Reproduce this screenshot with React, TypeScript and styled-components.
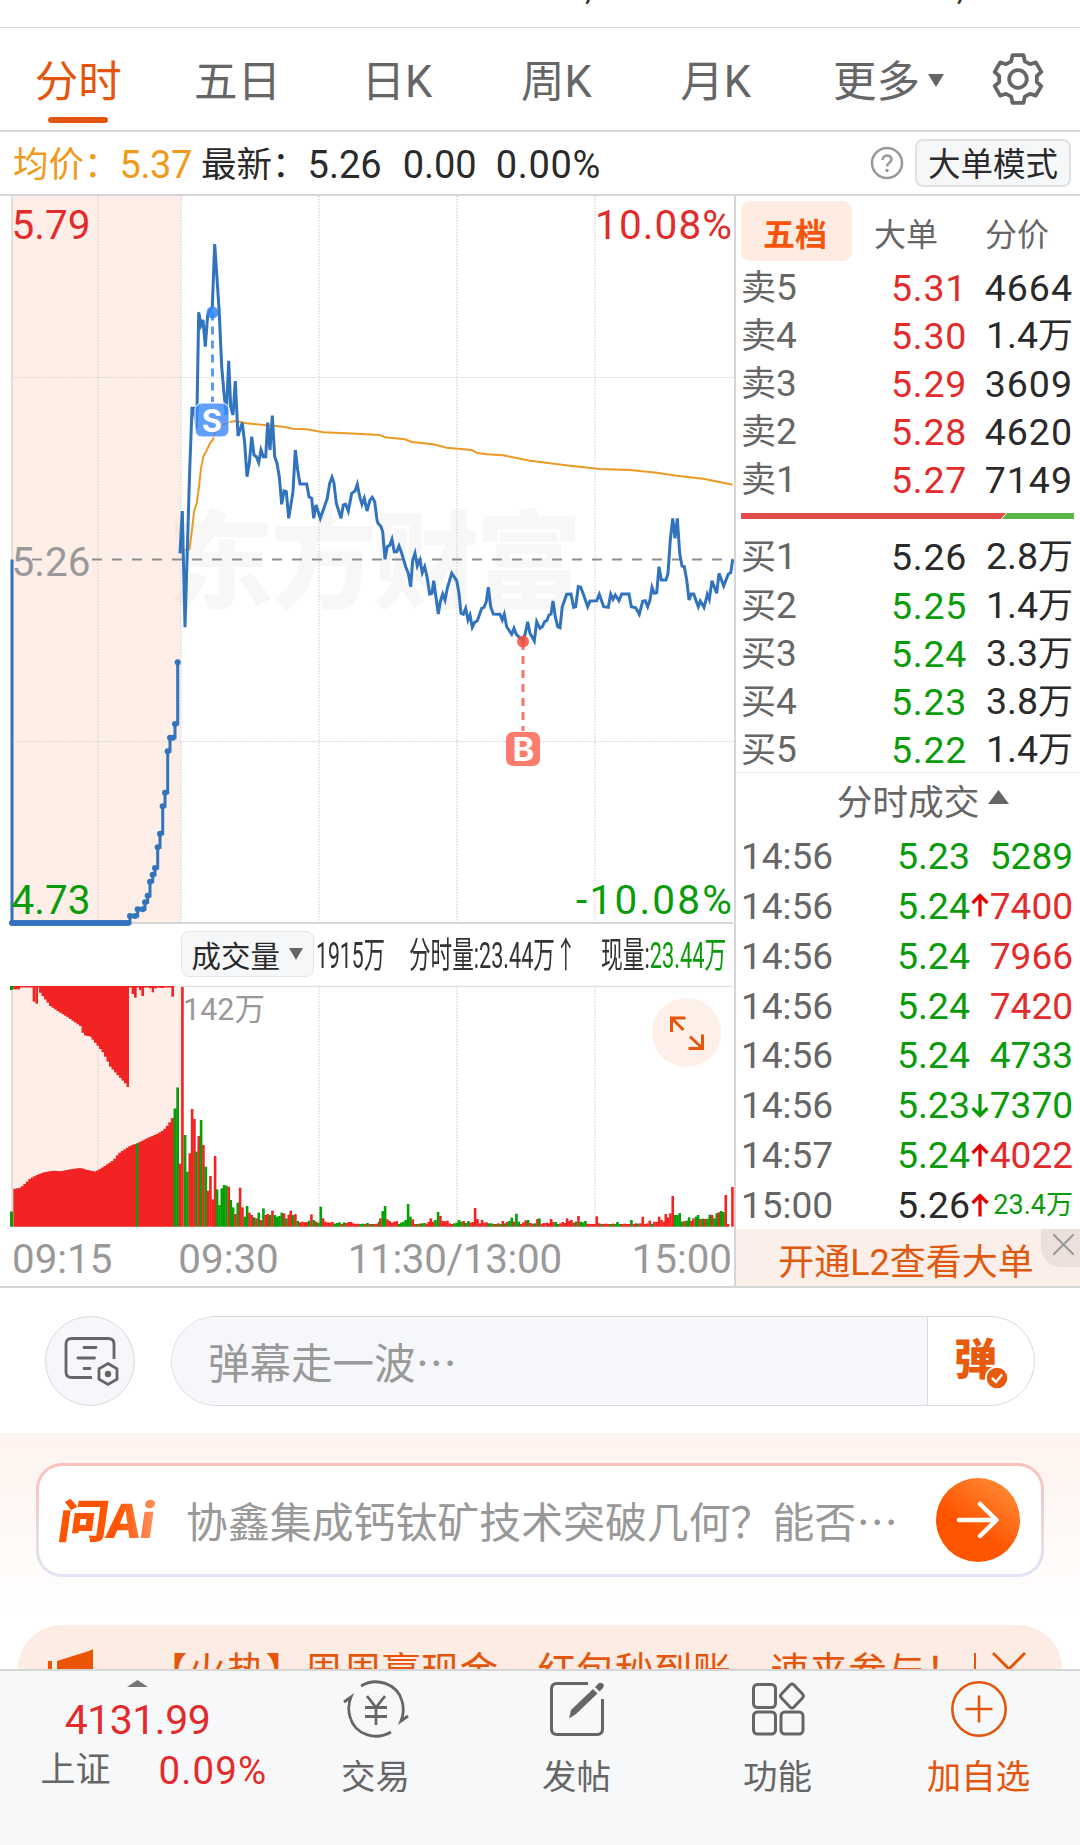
import React from "react";
import styled, { createGlobalStyle } from "styled-components";

const Global = createGlobalStyle`
  * { box-sizing: border-box; }
  html, body { margin: 0; padding: 0; background: #fff; }
  body { width: 1080px; height: 1845px; overflow: hidden; font-family: Roboto, "Noto Sans CJK SC", sans-serif; }
`;

const RED = "#e22b2b";
const GREEN = "#0a9b0a";
const ORANGE = "#e3560c";
const INK = "#2a2a2a";
const GRAY = "#666";
const MUTED = "#999";
const LINE = "#d6d6d8";

const Screen = styled.main`
  width: 1080px;
  height: 1845px;
  display: flex;
  flex-direction: column;
  overflow: hidden;
  background: #fff;
`;

const T = styled.span<{ $c?: string; $s?: number; $ls?: number; $ml?: number; $mt?: number }>`
  color: ${(p) => p.$c ?? INK};
  font-size: ${(p) => p.$s ?? 36}px;
  letter-spacing: ${(p) => p.$ls ?? 0}px;
  margin-left: ${(p) => p.$ml ?? 0}px;
  margin-top: ${(p) => p.$mt ?? 0}px;
  line-height: 1.2;
  white-space: nowrap;
`;

/* ---------- top ---------- */

const Peek = styled.div`
  height: 28px;
  border-bottom: 1.5px solid ${LINE};
  display: flex;
  padding-left: 585px;
  gap: 365px;
  align-items: flex-start;
  overflow: hidden;
`;
const PeekText = styled.span`
  height: 30px;
  font-size: 34px;
  line-height: 20px;
  margin-top: -22px;
  color: #333;
`;

const PeriodBar = styled.nav`
  height: 104px;
  display: flex;
  padding-left: 0;
  border-bottom: 2px solid ${LINE};
`;
const Period = styled.div<{ $on?: boolean }>`
  width: 159.4px;
  padding-right: 3px;
  flex: none;
  display: flex;
  flex-direction: column;
  align-items: center;
  padding-top: 29px;
  font-size: 43.5px;
  line-height: 52px;
  color: ${(p) => (p.$on ? ORANGE : GRAY)};
  &::after {
    content: "";
    width: 60px;
    height: 6px;
    border-radius: 3px;
    margin-top: 8px;
    background: ${(p) => (p.$on ? ORANGE : "transparent")};
  }
`;
const More = styled.div`
  display: flex;
  align-items: center;
  margin-left: 36px;
  width: 158px;
  gap: 8px;
  font-size: 43.5px;
  line-height: 52px;
  height: 52px;
  margin-top: 29px;
  color: ${GRAY};
  white-space: nowrap;
  svg { margin-top: -4px; }
`;
const GearBox = styled.div`
  padding-top: 24px;
`;

const InfoBar = styled.div`
  height: 64px;
  display: flex;
  align-items: center;
  padding: 0 9px 0 13px;
  border-bottom: 2px solid ${LINE};
`;
const Figures = styled.div`
  flex: 1;
  display: flex;
  align-items: center;
  padding-top: 5px;
`;
const Help = styled.svg`
  margin-right: 11px;
`;
const ModeButton = styled.div`
  width: 156px;
  height: 48px;
  border: 2px solid #e0e2e6;
  border-radius: 8px;
  background: #f6f7f9;
  display: flex;
  align-items: center;
  justify-content: center;
  padding-top: 4px;
  font-size: 32.5px;
  line-height: 40px;
  color: ${INK};
`;

/* ---------- quote ---------- */

const Quote = styled.section`
  height: 1092px;
  display: flex;
  border-bottom: 2px solid ${LINE};
`;
const ChartPane = styled.div`
  width: 734px;
  flex: none;
  display: flex;
  flex-direction: column;
`;
const Legend = styled.div`
  height: 60px;
  flex: none;
  display: flex;
  align-items: center;
  padding: 1px 0 0 181px;
`;
const Picker = styled.div`
  width: 132.5px;
  height: 46px;
  margin-top: -3px;
  border: 1.5px solid #e4e6ea;
  border-radius: 8px;
  background: #f6f7f9;
  display: flex;
  align-items: center;
  justify-content: center;
  gap: 9px;
  font-size: 29.5px;
  color: ${INK};
`;
const Narrow = styled.div<{ $w: number; $k: number; $ml: number }>`
  width: ${(p) => p.$w}px;
  margin-left: ${(p) => p.$ml}px;
  flex: none;
  span {
    display: inline-block;
    transform: scaleX(${(p) => p.$k});
    transform-origin: 0 50%;
    white-space: nowrap;
    font-size: 36px;
    line-height: 44px;
    color: #333;
  }
  i { font-style: normal; color: ${GREEN}; }
`;
const Volume = styled.div`
  position: relative;
  height: 243px;
  flex: none;
`;
const Expand = styled.div`
  position: absolute;
  left: 652px;
  top: 13px;
  width: 69px;
  height: 69px;
  border-radius: 50%;
  background: #fef0e8;
`;
const Times = styled.div`
  display: flex;
  height: 58px;
  flex: none;
  align-items: center;
  padding: 5px 2px 0 12px;
  font-size: 40.3px;
  color: ${MUTED};
  span:nth-child(2) { margin-left: 66px; }
  span:nth-child(3) { margin-left: 69px; letter-spacing: -0.3px; }
  span:nth-child(4) { margin-left: auto; }
`;

const Side = styled.aside`
  width: 346px;
  border-left: 2px solid ${LINE};
  display: flex;
  flex-direction: column;
`;
const SideTabs = styled.div`
  display: flex;
  height: 66px;
  flex: none;
  padding: 5px 0 0 5px;
`;
const SideTab = styled.div<{ $on?: boolean }>`
  width: 111px;
  height: 60px;
  display: flex;
  align-items: center;
  justify-content: center;
  padding: 1px 3px 0 0;
  border-radius: 9px;
  font-size: 32px;
  font-weight: ${(p) => (p.$on ? 700 : 400)};
  color: ${(p) => (p.$on ? "#f7540a" : GRAY)};
  background: ${(p) => (p.$on ? "#feebe2" : "transparent")};
`;
const Row = styled.div`
  height: 48.1px;
  flex: none;
  display: grid;
  grid-template-columns: 128px 98px 1fr;
  align-items: center;
  padding: 2px 7px 0 5px;
  font-size: 37.5px;
  line-height: 46px;
  color: ${GRAY};
  white-space: nowrap;
`;
const Level = styled.span`
  font-size: 37px;
  padding-top: 1px;
  b { font-weight: 400; font-size: 35px; }
`;
const Num = styled.span<{ $c: string; $s?: number; $ls?: number }>`
  text-align: right;
  color: ${(p) => p.$c};
  font-size: ${(p) => p.$s ?? 37.5}px;
  letter-spacing: ${(p) => p.$ls ?? 0}px;
  white-space: nowrap;
`;
const Unit = styled.span`
  font-size: 35px;
`;
const Ratio = styled.div`
  height: 29px;
  flex: none;
  padding: 11px 0 0 5px;
  svg { display: block; }
`;
const DealsHead = styled.div`
  height: 58px;
  flex: none;
  border-top: 1.5px solid #e6e6e8;
  display: flex;
  align-items: center;
  justify-content: center;
  gap: 9px;
  font-size: 35.7px;
  color: ${GRAY};
  padding: 0 0 3px 30px;
  svg { margin-top: -4px; }
`;
const DealRow = styled.div`
  height: 49.9px;
  flex: none;
  display: grid;
  grid-template-columns: 128px 101px 19px 1fr;
  align-items: center;
  padding: 3px 7px 0 5px;
  font-size: 37px;
  line-height: 45px;
  color: ${GRAY};
`;
const L2 = styled.div`
  position: relative;
  flex: 1;
  background: #fcefe9;
  display: flex;
  align-items: center;
  justify-content: center;
  padding: 3px 4px 0 0;
  font-size: 36px;
  color: #e0590f;
`;
const L2Close = styled.div`
  position: absolute;
  right: 0;
  top: 0;
  width: 39px;
  height: 38px;
  border-bottom-left-radius: 20px;
  background: #ebe0db;
  svg { display: block; margin: 5px 0 0 12px; }
`;

/* ---------- barrage ---------- */

const Barrage = styled.section`
  height: 145px;
  display: flex;
  align-items: flex-start;
  padding: 28px 45px 0;
  gap: 36px;
`;
const RoundIcon = styled.div`
  width: 90px;
  height: 90px;
  border-radius: 50%;
  border: 1.5px solid #d8dade;
  background: #f6f7fa;
  display: flex;
  align-items: center;
  justify-content: center;
  svg { margin-left: 1px; }
`;
const Field = styled.div`
  width: 864px;
  height: 90px;
  border: 1.5px solid #d8dade;
  border-radius: 46px;
  overflow: hidden;
  display: flex;
`;
const FieldText = styled.div`
  flex: 1;
  background: #f6f7fa;
  border-right: 1.5px solid #d8dade;
  padding-left: 36px;
  display: flex;
  align-items: center;
  font-family: "Noto Sans CJK SC", sans-serif;
  font-size: 41.5px;
  line-height: 60px;
  color: ${MUTED};
`;
const Toggle = styled.div`
  width: 106px;
  position: relative;
  padding: 15px 0 0 26px;
  font-size: 43px;
  line-height: 56px;
  font-weight: 800;
  color: #e85a0c;
  svg { position: absolute; left: 57px; top: 49px; }
`;

/* ---------- ask ai ---------- */

const AiZone = styled.section`
  height: 192px;
  padding: 30px 36px 0;
  background: linear-gradient(#fff3ee, #fff 95%);
`;
const AiCard = styled.div`
  height: 114px;
  border-radius: 26px;
  border: 3px solid transparent;
  background: linear-gradient(#fff, #fff) padding-box, linear-gradient(#f9c1b9, #e1e6f6) border-box;
  display: flex;
  align-items: center;
  padding: 0 21px 0 20px;
`;
const Logo = styled.div`
  width: 127px;
  flex: none;
  span {
    display: inline-block;
    transform: skewX(-8deg) scaleX(1.09);
    transform-origin: 0 50%;
    margin-top: -4px;
    font-family: "Noto Sans CJK SC", sans-serif;
    font-weight: 900;
    font-size: 46px;
    line-height: 60px;
    letter-spacing: -1px;
    background: linear-gradient(80deg, #ff5400 60%, #ff9a70);
    -webkit-background-clip: text;
    color: transparent;
  }
`;
const AiText = styled.div`
  flex: 1;
  font-family: "Noto Sans CJK SC", sans-serif;
  font-size: 41.9px;
  line-height: 60px;
  color: ${MUTED};
  white-space: nowrap;
`;
const Go = styled.div`
  width: 84px;
  height: 84px;
  flex: none;
  border-radius: 50%;
  background: linear-gradient(215deg, #ff9440, #ff5400 60%);
  display: flex;
  align-items: center;
  justify-content: center;
`;

const Promo = styled.section`
  height: 44px;
  margin: 0 18px;
  overflow: hidden;
  border-radius: 44px 44px 0 0;
  background: #fdece3;
  display: flex;
  align-items: flex-start;
  padding-left: 29px;
  svg { flex: none; }
`;
const PromoText = styled.div`
  width: 790px;
  flex: none;
  margin: 15px 18px 0 56px;
  overflow: hidden;
  white-space: nowrap;
  font-family: "Noto Sans CJK SC", sans-serif;
  font-size: 38.4px;
  letter-spacing: 0.45px;
  line-height: 56px;
  color: ${ORANGE};
`;
const Divider = styled.div`
  width: 1.5px;
  flex: none;
  height: 40px;
  margin: 28px 16px 0 17px;
  background: ${ORANGE};
`;

/* ---------- bottom ---------- */

const Bottom = styled.footer`
  height: 176px;
  border-top: 2px solid ${LINE};
  background: #f7f8fa;
  display: flex;
`;
const Index = styled.div`
  width: 275px;
  display: flex;
  flex-direction: column;
  align-items: center;
  padding-top: 9px;
`;
const IndexRow = styled.div`
  width: 276px;
  display: flex;
  align-items: center;
  padding-left: 41px;
  margin-top: 3px;
`;
const Action = styled.div<{ $c?: string }>`
  width: 201px;
  display: flex;
  flex-direction: column;
  align-items: center;
  padding-top: 8px;
  gap: 15px;
  font-size: 34.5px;
  line-height: 46px;
  color: ${(p) => p.$c ?? GRAY};
`;

/* ---------- data ---------- */

const P1 =
  "540,1090 547,963 555,1312 569,840 576,655 582,655 590,715 596,367 603,405 609,390 616,470 623,375 637,350 644,162 651,265 658,370 665,530 672,610 679,675 686,512 692,650 699,675 706,573 714,738 727,698 734,760 741,860 748,820 755,740 762,795 769,800 776,818 783,780 790,800 797,800 803,698 810,780 817,677 824,800 831,820 838,860 845,943 852,903 859,905 866,985 879,905 886,780 893,840 900,882 920,882 927,920 935,925 941,985 948,945 961,985 975,945 982,925 989,880 996,862 1002,880 1009,940 1023,985 1030,945 1037,943 1045,963 1055,910 1065,903 1072,883 1079,920 1086,943 1093,925 1101,963 1110,930 1117,922";
const P2 =
  "14,125 21,180 24,190 32,198 38,215 45,298 52,260 60,255 66,238 73,275 80,275 87,258 95,280 107,320 115,340 122,380 128,300 135,280 142,318 150,300 157,338 164,320 171,350 179,402 186,400 191,362 205,462 211,425 218,402 225,420 232,385 245,340 260,362 267,400 273,460 280,463 287,445 294,480 300,465 307,502 314,487 322,482 335,445 342,442 349,425 355,382 362,440 370,462 390,463 397,480 403,463 410,500 425,523 432,505 439,523 459,543 466,520 473,485 480,520 493,543 500,485 510,505 517,500 524,485 530,482 537,465 543,462 549,423 556,470 563,500 570,503 577,440 590,403 603,402 611,442 617,440 625,380 632,382 639,400 653,440 660,423 680,422 688,403 701,440 715,442 722,403 729,418 736,405 747,422 755,402 777,402 784,440 797,443 808,463 818,424 826,422 833,440 840,420 846,382 853,400 860,398 867,320 874,360 888,360 894,340 901,240 908,175 915,235 922,175 929,280 936,318 943,320 950,360 957,420 964,402 971,402 985,440 991,423 1002,442 1008,420 1012,403 1018,418 1026,362 1040,400 1047,340 1061,378 1075,342 1082,338 1088,298";
const A1 =
  "555,1080 568,1078 572,1050 576,1020 582,965 590,940 597,890 603,835 610,800 618,785 630,760 638,750 645,730 660,710 685,697 705,693 740,700 800,706 850,710 880,716 920,718 970,727 1040,730 1140,735";
const A2 =
  "45,742 105,748 125,756 190,763 230,773 305,780 320,788 350,793 400,796 480,812 600,827 690,837 780,840 860,848 920,857 1000,866 1088,884";
const PRE =
  "390,1068 405,1068 413,1048 428,1048 435,1027 443,1007 450,965 458,944 465,924 473,862 480,821 488,739 495,698 503,574 510,533 518,533 525,492 533,307";

type Pt = [number, number];
const conv = (s: string, ox: number, oy: number): Pt[] =>
  s.split(" ").map((q) => {
    const [x, y] = q.split(",").map(Number);
    return [ox + x / 3, oy + y / 3];
  });
const str = (p: Pt[]) => p.map(([x, y]) => `${x.toFixed(1)},${y.toFixed(1)}`).join(" ");

const price = str([...conv(P1, 0, 190), ...conv(P2, 370, 460)]);
const average = str([...conv(A1, 0, 190), ...conv(A2, 370, 190)]);
const pre = conv(PRE, 0, 560);
const prePath =
  "M12 559.5V923H130" + pre.map(([x, y]) => `H${x.toFixed(1)}V${y.toFixed(1)}`).join("");
const preDots: Pt[] = [...Array.from({ length: 48 }, (_, i): Pt => [12 + i * 2.47, 923]), ...pre];

/* bars: colour, x and top in thirds of a pixel */
const BARS =
  "r540,731 r547,201 g555,645 g562,755 r569,700 r576,567 r583,597 g589,695 r596,648 g603,600 r610,675 g617,740 r624,812 r631,768 r638,838 r645,708 g651,808 g658,855 g665,805 g672,795 g679,797 r686,800 g692,840 g699,862 r706,882 g713,848 r720,803 r727,862 g734,890 g741,858 r748,878 r755,885 g762,892 r769,895 g776,878 r783,900 g790,865 r797,885 r803,882 g810,885 r817,872 g824,885 g831,890 g838,888 g845,878 r852,880 g859,895 r866,884 r872,872 g879,885 r886,882 g893,903 r900,907 r907,905 r914,907 r920,906 g927,902 r934,883 g941,900 r948,905 g955,908 g962,860 r969,895 r976,905 r983,907 r990,908 r997,906 g1004,911 g1011,909 g1018,907 r1025,912 g1032,907 r1039,909 r1046,906 r1053,906 r1060,910 r1067,912 r1074,911 g1081,912 g1088,911 r1095,912 g1102,909 r1109,912 g1116,912 r1123,912 r1130,911 g1137,905 r1141,895 g1148,873 g1155,858 r1162,898 r1169,903 r1176,908 r1183,905 r1190,903 g1197,912 g1203,908 g1210,905 g1217,900 g1224,852 g1231,890 r1238,898 r1245,912 g1252,912 r1259,911 g1266,910 g1273,909 r1280,911 r1286,906 r1292,895 r1299,905 g1306,900 g1314,876 r1321,888 r1328,903 r1335,904 r1342,902 r1349,910 r1356,912 g1363,910 g1370,908 g1377,900 g1384,905 r1391,903 g1398,909 g1405,903 r1411,908 r1418,906 r1425,864 r1432,897 r1439,910 r1446,900 r1453,908 r1460,907 g1467,910 g1474,910 r1481,912 g1488,912 r1495,910 g1502,912 r1508,903 g1514,910 r1521,906 g1528,903 g1535,893 r1542,905 g1549,881 g1556,905 r1563,912 r1570,907 r1577,901 g1584,900 r1591,909 r1598,911 g1605,910 r1612,897 g1618,895 r1625,911 r1632,909 r1640,908 r1646,910 r1653,897 r1660,906 g1667,906 g1674,912 r1681,910 r1688,906 r1695,909 r1701,895 r1708,903 r1714,900 r1721,908 g1728,905 r1735,888 g1742,905 g1749,907 g1756,903 r1763,911 r1770,912 r1777,912 r1783,912 r1790,889 r1797,910 g1804,912 r1811,912 r1818,911 r1825,912 g1832,912 r1839,911 g1846,912 g1852,906 g1859,912 r1866,912 r1873,911 r1880,912 r1887,912 g1894,900 r1901,912 r1908,910 g1914,911 r1921,910 r1928,890 r1935,912 r1942,910 r1949,902 g1956,912 r1963,905 r1970,906 r1977,890 r1984,900 r1991,905 r1997,882 r2004,892 r2011,880 r2018,828 g2025,885 g2032,885 g2039,879 g2046,905 r2053,903 g2060,902 g2067,892 r2074,903 r2080,895 g2088,890 g2094,885 r2101,897 g2108,896 r2115,897 g2122,896 g2129,884 r2136,885 g2143,895 g2150,880 r2156,877 g2163,873 g2170,876 r2177,825 r2184,912 r2197,801";
const bars = BARS.split(" ").map((b) => {
  const [x, y] = b.slice(1).split(",").map(Number);
  return { up: b[0] === "r", x: x / 3, y: y / 3 };
});

const interp = (pts: Pt[], x: number) => {
  for (let i = 1; i < pts.length; i++) {
    if (x <= pts[i][0]) {
      const [a, b] = [pts[i - 1], pts[i]];
      return a[1] + ((b[1] - a[1]) * (x - a[0])) / (b[0] - a[0]);
    }
  }
  return pts[pts.length - 1][1];
};
const LOWER: Pt[] = [[40, 807], [60, 803], [70, 795], [90, 775], [110, 765], [130, 757], [160, 752], [180, 754], [210, 748], [240, 744], [260, 750], [285, 755], [310, 740], [340, 720], [355, 700], [390, 677], [415, 668], [440, 655], [470, 642], [490, 630], [505, 612], [512, 600], [520, 587]];
const UPPER: Pt[] = [[115, 212], [125, 225], [150, 258], [175, 275], [200, 290], [240, 318], [250, 345], [270, 350], [293, 378], [310, 400], [330, 440], [350, 463], [380, 495], [387, 512]];
const lowerBars = Array.from({ length: 64 }, (_, i) => {
  const x = 40 + i * 7.5;
  return { x: x / 3, y: interp(LOWER, x + 3) / 3, green: i === 49 };
});
const upperBars = Array.from({ length: 36 }, (_, i) => {
  const x = 117 + i * 7.5;
  return { x: x / 3, y: interp(UPPER, x + 3) / 3 };
});
const stubs = [[40, 208, 20], [98, 245, 8], [106, 251, 8], [395, 222, 7], [402, 233, 8], [417, 210, 7], [424, 228, 8], [447, 205, 7], [455, 217, 7], [462, 205, 9], [478, 204, 14], [514, 230, 8]];

const GRID_X = [98, 181, 319, 457, 595];

const sells = [["5", "5.31", "4664"], ["4", "5.30", "1.4万"], ["3", "5.29", "3609"], ["2", "5.28", "4620"], ["1", "5.27", "7149"]];
const buys = [["1", "5.26", "2.8万"], ["2", "5.25", "1.4万"], ["3", "5.24", "3.3万"], ["4", "5.23", "3.8万"], ["5", "5.22", "1.4万"]];
const deals: [string, string, string, string, string, string][] = [
  ["14:56", "5.23", GREEN, "", "5289", GREEN],
  ["14:56", "5.24", GREEN, "u", "7400", RED],
  ["14:56", "5.24", GREEN, "", "7966", RED],
  ["14:56", "5.24", GREEN, "", "7420", RED],
  ["14:56", "5.24", GREEN, "", "4733", GREEN],
  ["14:56", "5.23", GREEN, "d", "7370", GREEN],
  ["14:57", "5.24", GREEN, "u", "4022", RED],
  ["15:00", "5.26", INK, "u", "23.4万", GREEN],
];

/* ---------- parts ---------- */

const Amount = ({ v, c }: { v: string; c: string }) => (
  <Num $c={c} $ls={v.includes("万") ? 0 : 1}>
    {v.replace("万", "")}
    {v.includes("万") && <Unit>万</Unit>}
  </Num>
);

const Gear = () => {
  const pts: string[] = [];
  const c = 27;
  for (let i = 0; i < 6; i++) {
    const a = (i * 60 - 90) * (Math.PI / 180);
    const add = (r: number, d: number) => {
      const t = a + (d * Math.PI) / 180;
      pts.push(`${(c + r * Math.cos(t)).toFixed(1)},${(c + r * Math.sin(t)).toFixed(1)}`);
    };
    add(24.4, -13);
    add(24.4, 13);
    add(19, 21);
    add(19, 39);
  }
  return (
    <svg width="54" height="54" viewBox="0 0 54 54" fill="none" stroke={GRAY} strokeWidth="3.8" strokeLinejoin="round">
      <polygon points={pts.join(" ")} />
      <circle cx="27" cy="27" r="8.8" />
    </svg>
  );
};

const ChartSvg = styled.svg`
  display: block;
  flex: none;
  overflow: visible;
`;

const PriceChart = () => (
  <ChartSvg width="734" height="729" viewBox="0 196 734 729">
    <rect x="12" y="196" width="169" height="727" fill="#fdeee7" />
    <text x="168" y="600" textLength="414" fontFamily='"Noto Sans CJK SC"' fontWeight="900" fontSize="106" fill="#000" fillOpacity="0.03">
      东方财富
    </text>
    <line x1="12" x2="12" y1="196" y2="923" stroke={LINE} strokeWidth="1.5" />
    <g stroke="#d4d2d2" strokeWidth="1.2" strokeDasharray="1.5 1.5">
      {GRID_X.map((x) => <line key={x} x1={x} x2={x} y1="196" y2="923" />)}
      <line x1="12" x2="734" y1="377.5" y2="377.5" />
      <line x1="12" x2="734" y1="741.5" y2="741.5" />
    </g>
    <line x1="130" x2="733" y1="923" y2="923" stroke={LINE} strokeWidth="2" />
    <line x1="92" x2="733" y1="559.5" y2="559.5" stroke="#8d8d8d" strokeWidth="1.8" strokeDasharray="10 10" />
    <line x1="32" x2="42" y1="559.5" y2="559.5" stroke="#8d8d8d" strokeWidth="1.8" />
    <polyline points={average} fill="none" stroke="#ec9a26" strokeWidth="2" />
    <path d={prePath} fill="none" stroke="#3273bd" strokeWidth="3" />
    {preDots.map(([x, y], i) => <circle key={i} cx={x} cy={y} r="3" fill="#3273bd" />)}
    <polyline points={price} fill="none" stroke="#3273bd" strokeWidth="3" />
    <g fontFamily="Roboto" fontSize="40.5">
      <text x="11.5" y="239" fill={RED}>5.79</text>
      <text x="732" y="239" fill={RED} textAnchor="end" textLength="137">10.08%</text>
      <text x="11.5" y="576" fill={MUTED}>5.26</text>
      <text x="11.5" y="914" fill={GREEN}>4.73</text>
      <text x="732" y="914" fill={GREEN} textAnchor="end" textLength="156">-10.08%</text>
    </g>
    <g>
      <line x1="212.5" x2="212.5" y1="312.6" y2="402" stroke="#5a9cf5" strokeWidth="3" strokeDasharray="8 6" />
      <circle cx="212.5" cy="312.5" r="6" fill="#3585f5" fillOpacity=".85" />
      <rect x="195" y="403" width="34" height="34" rx="7" fill="#3d8bfb" fillOpacity=".82" stroke="#fff" strokeWidth="1" />
      <text x="212" y="431.5" fontFamily="Inter" fontWeight="700" fontSize="31" textAnchor="middle" fill="#fff">S</text>
    </g>
    <g>
      <line x1="523" x2="523" y1="642" y2="731" stroke="#f0786c" strokeWidth="3" strokeDasharray="8 6" />
      <circle cx="523" cy="641.5" r="6" fill="#f94d3e" fillOpacity=".85" />
      <rect x="506" y="732" width="34" height="34" rx="7" fill="#fd7c6e" />
      <text x="523.5" y="761" fontFamily="Inter" fontWeight="700" fontSize="33" textAnchor="middle" fill="#fff">B</text>
    </g>
  </ChartSvg>
);

const VolumeChart = () => (
  <ChartSvg width="734" height="243" viewBox="0 65 734 243">
    <rect x="12" y="66" width="169" height="241" fill="#fdeee7" />
    <line x1="12" x2="12" y1="66" y2="307" stroke={LINE} strokeWidth="1.5" />
    <line x1="181" x2="733" y1="66.3" y2="66.3" stroke="#dddddf" strokeWidth="1.3" />
    <g stroke="#d4d2d2" strokeWidth="1.2" strokeDasharray="1.5 1.5">
      {GRID_X.map((x) => <line key={x} x1={x} x2={x} y1="67" y2="306" />)}
    </g>
    <rect x="12" y="66" width="162" height="1.5" fill="#f22323" />
    {stubs.map(([x, y, w]) => <rect key={x} x={x / 3} y="66" width={w / 3} height={y / 3 - 66} fill="#f22323" />)}
    {upperBars.map((b) => <rect key={b.x} x={b.x} y="66" width={b.x > 126 ? 2.5 : 3.2} height={b.y - 66} fill="#f22323" />)}
    {lowerBars.map((b) => <rect key={b.x} x={b.x} y={b.y} width="3.2" height={306.7 - b.y} fill={b.green ? GREEN : "#f22323"} />)}
    <rect x="10" y="66" width="3" height="4" fill={GREEN} />
    <rect x="10" y="291.5" width="3" height="15.2" fill={GREEN} />
    <rect x="173.5" y="188.5" width="3.2" height="118.2" fill={GREEN} />
    <rect x="176.3" y="167.5" width="2.7" height="139.2" fill={GREEN} />
    {bars.map((b, i) => <rect key={i} x={b.x - 1.2} y={b.y} width="2.6" height={306.7 - b.y} fill={b.up ? "#f22323" : "#04a004"} />)}
    <text x="183" y="99.5" fontSize="30.5" fill={MUTED} fontFamily='Roboto, "Noto Sans CJK SC"'>142万</text>
  </ChartSvg>
);

const Arrow = ({ d }: { d: string }) =>
  d ? (
    <svg width="20" height="28" viewBox="0 0 20 28" fill="none" stroke={d === "u" ? "#e60000" : GREEN} strokeWidth="3.2">
      <path d={d === "u" ? "M10 24.5V3M2.500 11L10 3.500L17.500 11" : "M10 2V23.500M2.500 16L10 23.500L17.500 16"} />
    </svg>
  ) : (
    <span />
  );

export default function App() {
  return (
    <Screen>
      <Global />
      <Peek>
        <PeekText>,</PeekText>
        <PeekText>,</PeekText>
      </Peek>

      <PeriodBar>
        <Period $on>分时</Period>
        <Period>五日</Period>
        <Period>日K</Period>
        <Period>周K</Period>
        <Period>月K</Period>
        <More>
          更多
          <svg width="16" height="14" viewBox="0 0 16 14"><path d="M0 0H16L8 13Z" fill={GRAY} /></svg>
        </More>
        <GearBox><Gear /></GearBox>
      </PeriodBar>

      <InfoBar>
        <Figures>
          <T $c="#f09a1c" $s={35.5}>均价：</T>
          <T $c="#f09a1c" $s={38} $ls={-0.4}>5.37</T>
          <T $s={35.5} $ml={9}>最新：</T>
          <T $s={38}>5.26</T>
          <T $s={38} $ml={21}>0.00</T>
          <T $s={38} $ml={19} $ls={0.7}>0.00%</T>
        </Figures>
        <Help width="34" height="34" viewBox="0 0 34 34" fill="none" stroke="#999" strokeWidth="2.5">
          <circle cx="17" cy="17" r="15" />
          <path d="M12.500 14C12.500 8 21.500 8 21.500 13.500C21.500 17 17 16.500 17 20.500" />
          <circle cx="17" cy="24.500" r="1" fill="#999" strokeWidth="1.5" />
        </Help>
        <ModeButton>大单模式</ModeButton>
      </InfoBar>

      <Quote>
        <ChartPane>
          <PriceChart />
          <Legend>
            <Picker>
              成交量
              <svg width="14" height="13" viewBox="0 0 14 13"><path d="M0 0H14L7 12Z" fill="#666" /></svg>
            </Picker>
            <Narrow $w={69} $k={0.59} $ml={2}><span>1915万</span></Narrow>
            <Narrow $w={164} $k={0.6} $ml={24}><span>分时量:23.44万↑</span></Narrow>
            <Narrow $w={126} $k={0.605} $ml={28}><span>现量:<i>23.44万</i></span></Narrow>
          </Legend>
          <Volume>
            <VolumeChart />
            <Expand>
              <svg width="69" height="69" viewBox="0 0 69 69" fill="none" stroke={ORANGE} strokeWidth="3">
                <path d="M19.500 34V20H33.500M20 20.500L31.500 32M50.500 36.500V50.500H36.500M50 50L38 38.500" />
              </svg>
            </Expand>
          </Volume>
          <Times>
            <span>09:15</span>
            <span>09:30</span>
            <span>11:30/13:00</span>
            <span>15:00</span>
          </Times>
        </ChartPane>

        <Side>
          <SideTabs>
            <SideTab $on>五档</SideTab>
            <SideTab>大单</SideTab>
            <SideTab>分价</SideTab>
          </SideTabs>
          {sells.map(([n, p, q]) => (
            <Row key={n}>
              <Level><b>卖</b>{n}</Level>
              <Num $c={RED} $ls={0.7}>{p}</Num>
              <Amount v={q} c={INK} />
            </Row>
          ))}
          <Ratio>
            <svg width="333" height="6" viewBox="0 0 333 6">
              <path d="M0 0H265L260 6H0Z" fill="#e04d4b" />
              <path d="M266 0H333V6H261Z" fill="#5ab545" />
            </svg>
          </Ratio>
          {buys.map(([n, p, q], i) => (
            <Row key={n}>
              <Level><b>买</b>{n}</Level>
              <Num $c={i === 0 ? INK : GREEN} $ls={0.7}>{p}</Num>
              <Amount v={q} c={INK} />
            </Row>
          ))}
          <DealsHead>
            分时成交
            <svg width="21" height="15" viewBox="0 0 21 15"><path d="M10.500 0L21 14H0Z" fill="#666" /></svg>
          </DealsHead>
          {deals.map(([t, p, pc, a, q, qc], i) => (
            <DealRow key={i}>
              <span>{t}</span>
              <Num $c={pc}>{p}</Num>
              <Arrow d={a} />
              <Num $c={qc} $s={i === 7 ? 27 : 37}>{q}</Num>
            </DealRow>
          ))}
          <L2>
            开通L2查看大单
            <L2Close>
              <svg width="21" height="21" viewBox="0 0 21 21" stroke="#999" strokeWidth="2"><path d="M0 0L21 21M21 0L0 21" /></svg>
            </L2Close>
          </L2>
        </Side>
      </Quote>

      <Barrage>
        <RoundIcon>
          <svg width="56" height="52" viewBox="0 0 56 52" fill="none" stroke="#666" strokeWidth="2.8" strokeLinecap="round">
            <path d="M51 24V9Q51 3.500 45 3.500H8.500Q3 3.500 3 9V37Q3 42.500 8.500 42.500H29" strokeLinecap="butt" />
            <path d="M21 12.500H33M15 23H31.500M21 33.500H27" />
            <path d="M45 28.500L54 33.800V44.200L45 49.500L36 44.200V33.800Z" />
            <circle cx="45" cy="39" r="1.8" fill="#666" />
          </svg>
        </RoundIcon>
        <Field>
          <FieldText>弹幕走一波…</FieldText>
          <Toggle>
            弹
            <svg width="24" height="24" viewBox="0 0 24 24">
              <circle cx="12" cy="12" r="12" fill="#fff" />
              <circle cx="12" cy="12" r="10.3" fill="#e85a0c" />
              <path d="M7 12L11 16L17 8.500" fill="none" stroke="#fff" strokeWidth="2.5" />
            </svg>
          </Toggle>
        </Field>
      </Barrage>

      <AiZone>
        <AiCard>
          <Logo><span>问Ai</span></Logo>
          <AiText>协鑫集成钙钛矿技术突破几何？能否…</AiText>
          <Go>
            <svg width="44" height="40" viewBox="0 0 44 40" fill="none" stroke="#fff" strokeWidth="4.5" strokeLinecap="round" strokeLinejoin="round">
              <path d="M3 20H40M24 4L40.500 20L24 36" />
            </svg>
          </Go>
        </AiCard>
      </AiZone>

      <Promo>
        <svg width="46" height="44" viewBox="0 0 46 44" fill="#ea5504">
          <path d="M1 36H5V44H1ZM10 36L42 26L46 24V44H10Z" />
        </svg>
        <PromoText>【火热】周周赢现金，红包秒到账，速来参与！</PromoText>
        <Divider />
        <svg width="34" height="44" viewBox="0 0 34 44" fill="none" stroke={ORANGE} strokeWidth="3"><path d="M1 28L17 44L33 28" /></svg>
      </Promo>

      <Bottom>
        <Index>
          <svg width="21" height="7" viewBox="0 0 21 7"><path d="M10.500 0L21 7H0Z" fill="#777" /></svg>
          <T $c={RED} $s={41} $ls={-0.5} $mt={9}>4131.99</T>
          <IndexRow>
            <T $c={GRAY} $s={35}>上证</T>
            <T $c={RED} $s={38.5} $ls={1.1} $ml={48}>0.09%</T>
          </IndexRow>
        </Index>
        <Action>
          <svg width="66" height="60" viewBox="0 0 66 60" fill="none" stroke={GRAY} strokeWidth="2.8">
            <path d="M18 7C33 -2 54 4 59 22C61 29 60.500 36 58 42L65 37" />
            <path d="M48 53C33 62 12 56 7 38C5 31 5.500 24 8 18L1 23" />
            <path d="M24 17L33 28.500L42 17M33 28V46M22 28.500H44M22 37.500H44" />
          </svg>
          交易
        </Action>
        <Action>
          <svg width="60" height="60" viewBox="0 0 60 60" fill="none" stroke={GRAY} strokeWidth="3">
            <path d="M41 4.500H10Q4.500 4.500 4.500 10V50Q4.500 55.500 10 55.500H50Q55.500 55.500 55.500 50V20" />
            <path d="M24 31L46 10L50.500 14.500L29 35L22 39.500Z" fill={GRAY} stroke="none" />
            <path d="M48 8L52 4Q55 3 57 6L56 9L52.500 12.500Z" fill={GRAY} stroke="none" />
          </svg>
          发帖
        </Action>
        <Action>
          <svg width="60" height="60" viewBox="0 0 60 60" fill="none" stroke={GRAY} strokeWidth="3">
            <rect x="5.500" y="5.500" width="22" height="23" rx="4" />
            <rect x="5.500" y="33" width="22" height="22" rx="4" />
            <rect x="33" y="33" width="22" height="22" rx="4" />
            <path d="M42.200 5.800Q44 4 45.800 5.800L54.500 15Q56.500 17 54.500 19L45.800 28.200Q44 30 42.200 28.200L33.500 19Q31.500 17 33.500 15Z" />
          </svg>
          功能
        </Action>
        <Action $c={ORANGE}>
          <svg width="60" height="60" viewBox="0 0 60 60" fill="none" stroke={ORANGE} strokeWidth="2.6">
            <circle cx="30" cy="30" r="26.7" />
            <path d="M30 16.500V43.500M16.500 30H43.500" />
          </svg>
          加自选
        </Action>
      </Bottom>
    </Screen>
  );
}
